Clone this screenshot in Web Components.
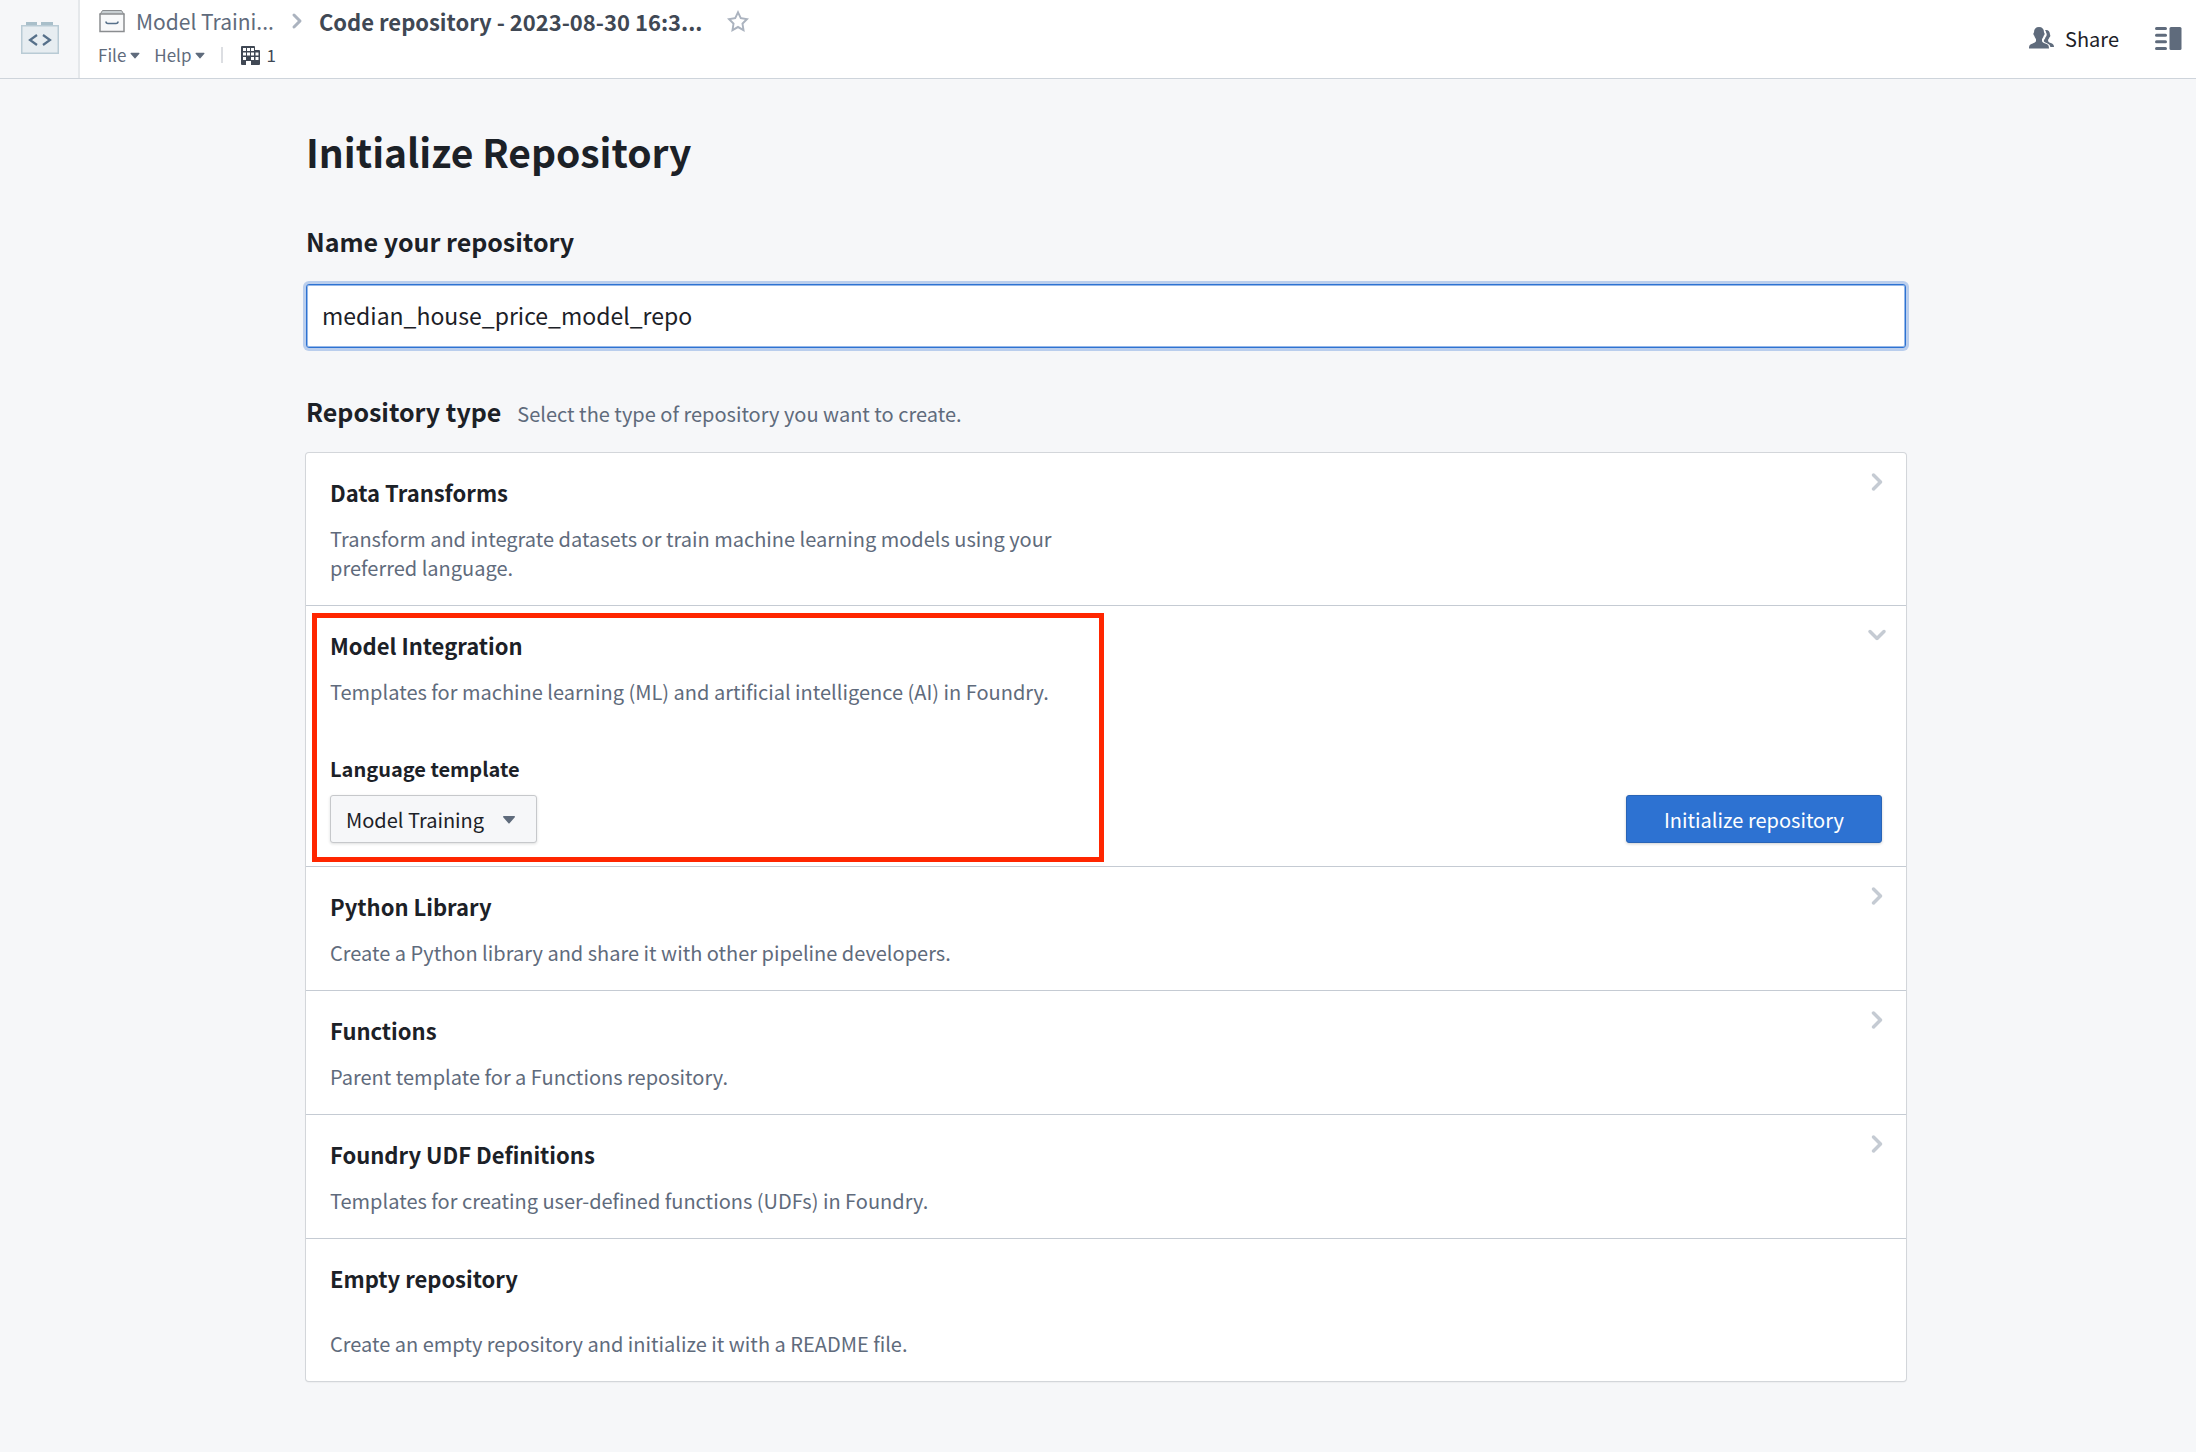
<!DOCTYPE html>
<html lang="en">
<head>
<meta charset="utf-8">
<title>Initialize Repository</title>
<style>
  body {
    margin: 0;
    min-height: 100vh;
    background: #f6f7f9;
    color: #1c2127;
    font-family: "Noto Sans CJK SC", "Noto Sans", sans-serif;
    font-size: 20px;
    line-height: 29px;
  }
</style>
</head>
<body>
<app-page></app-page>

<script>
const ICONS = {
  'chevron-right': '<path d="M10.71 7.29l-4-4a1.003 1.003 0 00-1.42 1.42L8.59 8 5.3 11.29c-.19.18-.3.43-.3.71a1.003 1.003 0 001.71.71l4-4c.18-.18.29-.43.29-.71 0-.28-.11-.53-.29-.71z"/>',
  'chevron-down': '<path d="M12 5c-.28 0-.53.11-.71.29L8 8.59l-3.29-3.3a1.003 1.003 0 00-1.42 1.42l4 4c.18.18.43.29.71.29s.53-.11.71-.29l4-4A1.003 1.003 0 0012 5z"/>',
  'caret-down': '<path d="M12 6.5c0-.28-.22-.5-.5-.5h-7a.495.495 0 00-.37.83l3.5 4c.09.1.22.17.37.17s.28-.07.37-.17l3.5-4c.08-.09.13-.2.13-.33z"/>',
  'star': '<path fill-rule="evenodd" d="M16 6.11l-5.53-.84L8 0 5.53 5.27 0 6.11l4 4.1L3.06 16 8 13.27 12.94 16 12 10.21l4-4.1zM4.91 13.2l.59-3.62L3 7.02l3.45-.53L8 3.2l1.55 3.29 3.45.53-2.5 2.56.59 3.62L8 11.49 4.91 13.2z"/>'
};

class BpIcon extends HTMLElement {
  constructor() { super(); this.attachShadow({ mode: 'open' }); }
  connectedCallback() {
    const size = this.getAttribute('size') || 22;
    this.shadowRoot.innerHTML = `
      <style>:host { display: inline-flex; flex: none; } svg { display: block; fill: currentColor; }</style>
      <svg width="${size}" height="${size}" viewBox="0 0 16 16" aria-hidden="true">${ICONS[this.getAttribute('name')]}</svg>`;
  }
}

class AppHeader extends HTMLElement {
  constructor() {
    super();
    this.attachShadow({ mode: 'open' }).innerHTML = `
      <style>
        :host { display: flex; height: 78px; background: #fff; border-bottom: 1px solid #ced4db; }
        svg { display: block; flex: none; }
        button { font: inherit; color: inherit; background: none; border: 0; padding: 0; margin: 0; display: flex; align-items: center; cursor: pointer; }
        a { color: inherit; text-decoration: none; display: flex; align-items: center; }
        .app { box-sizing: border-box; width: 80px; padding: 0 0 2px 2px; border-right: 2px solid #e5e8eb; background: #f6f7f9; display: flex; align-items: center; justify-content: center; }
        .left { flex: 1; min-width: 0; padding: 5px 0 0 18px; display: flex; flex-direction: column; gap: 4px; }
        .crumbs { display: flex; align-items: center; height: 32px; color: #5f6b7c; font-size: 21px; line-height: 32px; white-space: nowrap; }
        .crumbs a { gap: 10px; }
        .crumbs .sep { color: #abb3bf; margin: 0 10px 0 11px; }
        .crumbs h1 { margin: 0; font-size: 22px; line-height: 32px; font-weight: 600; color: #404854; }
        .star { color: #abb3bf; margin-left: 25px; }
        .menu { display: flex; align-items: center; height: 28px; color: #5f6b7c; font-size: 17px; line-height: 28px; }
        .menu button + button { margin-left: 10px; }
        .rule { width: 2px; height: 16px; background: #dcdee2; margin: 0 18px 0 12px; }
        .org { display: flex; align-items: center; gap: 6px; color: #404854; }
        .right { display: flex; align-items: center; gap: 36px; padding: 0 14px 2px 0; color: #5f6b7c; }
        .share { gap: 11px; }
        .share span { color: #1c2127; }
      </style>
      <div class="app">
        <svg width="38" height="32" viewBox="0 0 38 32" role="img" aria-label="Code Repositories">
          <path d="M5 0h11v4H5zM20 0h12v4H20z" fill="#a9bfca"/>
          <path d="M.75 3.75h36.5v27.5H.75z" fill="#e7edf1" stroke="#b9cbd5" stroke-width="1.5"/>
          <path d="M16 13l-7 5 7 5M22 13l7 5-7 5" fill="none" stroke="#56708a" stroke-width="2.200"/>
        </svg>
      </div>
      <div class="left">
        <nav class="crumbs" aria-label="Breadcrumb">
          <a href="#">
            <svg width="28" height="24" viewBox="-1 0 28 24" aria-hidden="true">
              <path d="M3.500 1.500h19l2.500 4H1z" fill="#c8cfd2" stroke="#8a8d90"/>
              <path d="M1 5h24v17.500H1z" fill="#f8f9fa" stroke="#8a8d90" stroke-width="1.500"/>
              <path d="M7 12.500q0 2 2 2h8q2 0 2-2" fill="none" stroke="#56708a" stroke-width="1.600"/>
            </svg>
            <span>Model Traini...</span>
          </a>
          <bp-icon class="sep" name="chevron-right" size="24"></bp-icon>
          <h1>Code repository - 2023-08-30 16:3...</h1>
          <button class="star" aria-label="Add to favorites"><bp-icon name="star"></bp-icon></button>
        </nav>
        <div class="menu">
          <button>File<bp-icon name="caret-down" size="18"></bp-icon></button>
          <button>Help<bp-icon name="caret-down" size="18"></bp-icon></button>
          <span class="rule"></span>
          <span class="org">
            <svg width="19" height="19" viewBox="0 0 19 19" aria-hidden="true">
              <path fill="#404854" fill-rule="evenodd" d="M1 0h12a1 1 0 011 1v3h4a1 1 0 011 1v13a1 1 0 01-1 1h-8v-4H5v4H1a1 1 0 01-1-1V1a1 1 0 011-1zM2 2v3h3V2zM6 2v3h3V2zM10 2v3h3V2zM2 6.500v3h3v-3zM6 6.500v3h3v-3zM10 6.500v3h3v-3zM14.500 6.500v3h3v-3zM2 11v3h3v-3zM10 11v3h3v-3zM14.500 11v3h3v-3z"/>
            </svg>
            <span>1</span>
          </span>
        </div>
      </div>
      <div class="right">
        <button class="share">
          <svg width="25" height="22" viewBox="0 0 25 22" aria-hidden="true">
            <path fill="currentColor" d="M10 0c3.200 0 5 2 5 5.200 0 .6.700.8.600 1.800-.1 1.200-.8 1.400-1 2-.3 1.400-1.200 2-1.600 3.200v2c.6 1.500 3 2 4.500 2.700 2 1 2.300 1.600 2.500 4.600H0c.2-3 .5-3.600 2.500-4.600C4 16.200 6.400 15.700 7 14.200v-2C6.600 11 5.700 10.400 5.400 9c-.2-.6-.9-.8-1-2-.1-1 .6-1.200.6-1.800C5 2 6.800 0 10 0z"/>
            <path fill="currentColor" d="M16 3c3.500-.4 4.900 1.500 5 4.500.6.700.4 2.200-.5 2.800-.4 1.200-1 1.700-1.400 2.400v1.500c.7 1.400 2.500 1.600 3.900 2.300 1.500.8 2 2 2 3.500h-3.600c-.6-2.400-1.600-2.900-3.400-3.800-1.500-.7-3-1-3.200-2.200.1-1.500 1.200-2 1.700-3.800 1.300-1 1.700-3.200.6-4.600 0-1-.5-1.800-1.100-2.600z"/>
          </svg>
          <span>Share</span>
        </button>
        <button aria-label="Toggle side panel">
          <svg width="27" height="23" viewBox="0 0 27 23" aria-hidden="true" fill="currentColor">
            <rect width="12" height="3" rx="1.500"/><rect y="6.700" width="12" height="3" rx="1.500"/>
            <rect y="13.300" width="12" height="3" rx="1.500"/><rect y="20" width="12" height="3" rx="1.500"/>
            <rect x="14.500" width="12" height="23" rx="1.500"/>
          </svg>
        </button>
      </div>`;
  }
}

/* One repository type. Slots: title, default (description), footer, note. */
class RepoOption extends HTMLElement {
  constructor() {
    super();
    this.attachShadow({ mode: 'open' }).innerHTML = `
      <style>
        :host { display: block; position: relative; padding: 24px 24px 23px; border-bottom: 1px solid #c5cbd3; }
        :host(:last-child) { border-bottom: 0; }
        .head { display: flex; justify-content: space-between; align-items: flex-start; }
        .text { max-width: 736px; }
        h3 { margin: 0 0 17px; font-size: 22px; line-height: 30px; font-weight: 600; }
        :host([spaced]) h3 { margin-bottom: 36px; }
        p { margin: 0; color: #5f6b7c; }
        bp-icon { color: #c5cbd3; margin: -9px -9px 0 0; }
      </style>
      <div class="head">
        <div class="text"><h3><slot name="title"></slot></h3><p><slot></slot></p></div>
      </div>
      <slot name="footer"></slot>
      <slot name="note"></slot>`;
  }
  connectedCallback() {
    if (this.hasAttribute('spaced')) return;
    const icon = document.createElement('bp-icon');
    icon.setAttribute('name', this.hasAttribute('open') ? 'chevron-down' : 'chevron-right');
    icon.setAttribute('size', 28);
    this.shadowRoot.querySelector('.head').append(icon);
  }
}

class TemplateForm extends HTMLElement {
  constructor() {
    super();
    this.attachShadow({ mode: 'open' }).innerHTML = `
      <style>
        :host { display: flex; justify-content: space-between; align-items: flex-end; margin-top: 48px; }
        label { display: block; font-weight: 600; margin-bottom: 12px; }
        .select { display: grid; width: max-content; align-items: center; }
        .select > * { grid-area: 1 / 1; }
        select, button { font: inherit; height: 48px; border-radius: 3px; box-sizing: border-box; cursor: pointer; }
        select { appearance: none; width: 207px; padding: 0 15px; color: #1c2127; background: #f6f7f9; border: 1px solid #c6c8cb; box-shadow: 0 1px 3px rgba(17,20,24,.14); }
        bp-icon { justify-self: end; margin-right: 16px; color: #5f6b7c; pointer-events: none; }
        button { padding: 0 37px; color: #fff; background: #2d72d2; border: 1px solid #2964b6; box-shadow: 0 1px 3px rgba(17,20,24,.2); }
      </style>
      <div>
        <label for="template">Language template</label>
        <div class="select">
          <select id="template"><option>Model Training</option></select>
          <bp-icon name="caret-down" size="24"></bp-icon>
        </div>
      </div>
      <button type="button">Initialize repository</button>`;
  }
}

class CalloutFrame extends HTMLElement {
  constructor() {
    super();
    this.attachShadow({ mode: 'open' }).innerHTML = `
      <style>:host { display: block; position: absolute; inset: 7px auto 4px 6px; width: 792px; box-sizing: border-box; border: 5px solid #ff2600; pointer-events: none; }</style>`;
  }
}

class AppPage extends HTMLElement {
  constructor() {
    super();
    this.attachShadow({ mode: 'open' }).innerHTML = `
      <style>
        :host { display: block; }
        main { max-width: 1600px; margin: 0 auto; padding: 44px 0 68px; }
        .body { padding-left: 16px; }
        h1 { margin: 0 0 44px; font-size: 39px; line-height: 56px; font-weight: 600; }
        h2 { margin: 0; font-size: 25px; line-height: 36px; font-weight: 600; }
        h2 label { display: block; }
        input { display: block; width: 100%; height: 64px; box-sizing: border-box; margin: 25px 0 45px; padding: 0 15px 2px; font: inherit; font-size: 23px; color: inherit; background: #fff; border: 1px solid #2d72d2; border-radius: 3px; outline: 0; box-shadow: inset 0 0 0 1px rgba(45,114,210,.5), 0 0 0 3px rgba(45,114,210,.3); }
        .type { display: flex; align-items: baseline; gap: 16px; margin-bottom: 24px; }
        .type span { color: #5f6b7c; }
        .card { background: #fff; border-radius: 3px; box-shadow: 0 0 0 1px #d3d6da, 0 1px 2px rgba(17,20,24,.12); }
      </style>
      <app-header></app-header>
      <div class="body">
        <main>
          <h1>Initialize Repository</h1>
          <h2><label for="name">Name your repository</label></h2>
          <input id="name" type="text" value="median_house_price_model_repo" spellcheck="false">
          <div class="type"><h2>Repository type</h2><span>Select the type of repository you want to create.</span></div>
          <div class="card">
            <repo-option><span slot="title">Data Transforms</span>Transform and integrate datasets or train machine learning models using your preferred language.</repo-option>
            <repo-option open><span slot="title">Model Integration</span>Templates for machine learning (ML) and artificial intelligence (AI) in Foundry.<template-form slot="footer"></template-form><callout-frame slot="note"></callout-frame></repo-option>
            <repo-option><span slot="title">Python Library</span>Create a Python library and share it with other pipeline developers.</repo-option>
            <repo-option><span slot="title">Functions</span>Parent template for a Functions repository.</repo-option>
            <repo-option><span slot="title">Foundry UDF Definitions</span>Templates for creating user-defined functions (UDFs) in Foundry.</repo-option>
            <repo-option spaced><span slot="title">Empty repository</span>Create an empty repository and initialize it with a README file.</repo-option>
          </div>
        </main>
      </div>`;
  }
}

customElements.define('bp-icon', BpIcon);
customElements.define('app-header', AppHeader);
customElements.define('repo-option', RepoOption);
customElements.define('template-form', TemplateForm);
customElements.define('callout-frame', CalloutFrame);
customElements.define('app-page', AppPage);
</script>
</body>
</html>
